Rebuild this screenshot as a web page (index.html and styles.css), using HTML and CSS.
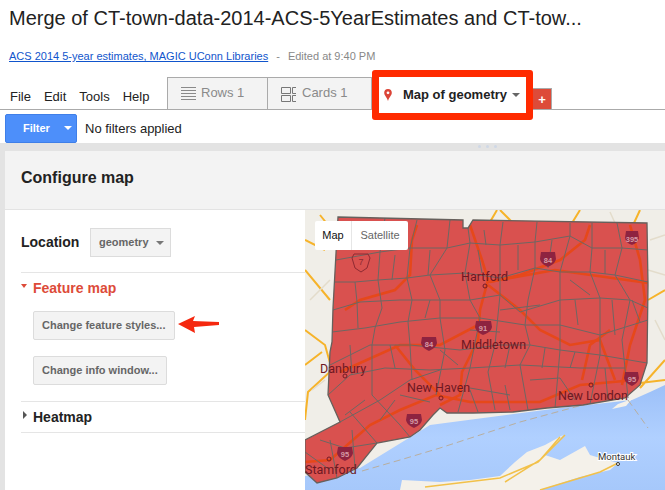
FILE: index.html
```html
<!DOCTYPE html>
<html>
<head lang="en">
    <meta charset="UTF-8">
    <title>Merge of CT-town-data</title>
    <link rel="stylesheet" href="styles.css">
</head>
<body>
<div id="page">
    <h1 class="title">Merge of CT-town-data-2014-ACS-5YearEstimates and CT-tow...</h1>
    <div class="meta">
        <a class="source" href="#">ACS 2014 5-year estimates, MAGIC UConn Libraries</a>
        <span class="dash">-</span>
        <span class="edited">Edited at 9:40 PM</span>
    </div>
    <div class="tabbar">
        <ul class="menu">
            <li>File</li>
            <li>Edit</li>
            <li>Tools</li>
            <li>Help</li>
        </ul>
        <div class="tab tab-rows">
            <svg class="tab-icon" width="15" height="16" viewBox="0 0 15 16">
                <path d="M0 1.5H15M0 4.5H15M0 7.5H15M0 10.5H15M0 13.5H15" stroke="#8a8a8a" fill="none"/>
            </svg>
            Rows 1
        </div>
        <div class="tab tab-cards">
            <svg class="tab-icon" width="16" height="16" viewBox="0 0 16 16">
                <path d="M.5 1.5H9.5V7.5H.5ZM.5 9.5H9.5V15.5H.5ZM15 1.5H11.5V7.5H15M15 9.5H11.5V15.5H15" stroke="#777" fill="none"/>
            </svg>
            Cards 1
        </div>
        <div class="tab-map">
            <svg class="pin" width="8" height="12" viewBox="0 0 8 12">
                <path d="M4 0A3.8 3.8 0 0 0 .2 3.8C.2 6.5 3 8.5 4 12 5 8.5 7.8 6.5 7.8 3.8A3.8 3.8 0 0 0 4 0Z" fill="#db4437"/>
                <circle cx="4" cy="3.8" r="1.4" fill="#fff"/>
            </svg>
            <span class="tab-map-name">Map of geometry</span>
            <span class="caret caret-dark"></span>
        </div>
        <div class="tab-add">+</div>
    </div>
    <div class="filterbar">
        <div class="filter-btn">
            <span>Filter</span>
            <span class="caret caret-white"></span>
        </div>
        <span class="filter-text">No filters applied</span>
    </div>
    <div class="splitter">
        <span class="grip"></span><span class="grip"></span><span class="grip"></span>
    </div>
    <div class="panel">
        <div class="panel-head">Configure map</div>
        <div class="panel-body">
            <div class="side">
                <div class="location">
                    <span class="location-label">Location</span>
                    <div class="select">geometry <span class="caret caret-grey"></span></div>
                </div>
                <div class="section">
                    <div class="section-title section-open"><span class="tri-down"></span>Feature map</div>
                    <div class="btn btn-first">Change feature styles...</div>
                    <div class="btn">Change info window...</div>
                </div>
                <div class="section section-closed">
                    <div class="section-title"><span class="tri-right"></span>Heatmap</div>
                </div>
            </div>
            <div class="map">
                <svg class="map-svg" width="360" height="280" viewBox="305 210 360 280">
                    <defs>
                        <linearGradient id="sea" x1="0" y1="0" x2="0" y2="1">
                            <stop offset="0" stop-color="#9cc0f8"/>
                            <stop offset="0.5" stop-color="#b0d0ff"/>
                            <stop offset="1" stop-color="#a6c8fb"/>
                        </linearGradient>
                    </defs>
                    <rect x="305" y="210" width="360" height="280" fill="#f0eee8"/>
                    <path d="M305 490V476L360 468 430 425 560 408 632 400 650 392 665 385V490Z" fill="url(#sea)"/>
                    <path d="M400 490L402 480 440 482 470 480 500 476 515 462 527 452 545 445 563 435 555 445 545 455 560 460 585 446 590 455 600 458 618 463 610 470 580 477 555 485 540 490Z" fill="#f4f1ea"/>
                    <path d="M618 404L632 399 626 406 612 409Z" fill="#f4f1ea"/>
                    <path d="M540 490L600 472 618 463M425 487L500 478 538 462 565 435M505 482L540 460 560 437" fill="none" stroke="#f2c14a" stroke-width="1.5"/>
                    <path d="M640 388L665 360M640 383L665 380M305 330L325 345 332 370 308 392 305 420M305 365L322 352M305 270L330 300M320 215L340 240M305 240L325 250M500 210L512 222M490 222L497 210M580 210L572 223M640 210L634 223M648 300L665 290" fill="none" stroke="#f6b32a" stroke-width="2"/>
                    <path d="M650 240L665 235M648 270L665 275M610 212L615 223M655 320L665 340M312 390L325 380M310 300L330 280" fill="none" stroke="#e3dccb" stroke-width="1.5"/>
                    <path d="M362 471L400 460 440 448 520 422 590 403M628 400L648 428" fill="none" stroke="#b8ae9f" stroke-width="1" stroke-dasharray="7 4"/>

                    <polygon class="state" points="338,217 463,220 463,228 468,228 473,220 647,223 648,285 647,363 640,385 625,398 583,405 547,408 513,412 473,413 447,413 440,408 433,415 420,430 410,437 377,443 357,468 337,478 317,483 305,472 305,440 340,422 328,395 330,352 332,342 333,308"/>

                    <g class="highways">
                        <path d="M345 310L360 300 395 290 410 275 412 240 417 225"/>
                        <path d="M470 225L482 260 488 280 480 310 478 340 462 372 460 395 440 405"/>
                        <path d="M490 282L520 275 560 260 585 240 590 225"/>
                        <path d="M488 285L520 310 540 330 570 345 600 340 615 380"/>
                        <path d="M488 282L555 270 648 283"/>
                        <path d="M630 225L640 260 645 300 630 345 622 385"/>
                        <path d="M305 462L330 460 370 425 400 410 436 395 470 402 540 402 580 385 635 380"/>
                        <path d="M340 372L400 345 440 345 478 325"/>
                        <path d="M395 345L415 370 440 395"/>
                        <path d="M582 380L590 345 610 330"/>
                    </g>
                    <g class="towns">
                        <path d="M336 260L380 252 410 248 447 248 470 243 500 245 535 242 570 236 592 248 622 248 648 250"/>
                        <path d="M334 282L355 282 378 280 407 278 430 275 465 273 500 278 535 268 560 272 590 272 615 275 648 282"/>
                        <path d="M333 310L360 302 400 300 440 300 470 300 500 295 520 312 560 300 600 298 630 300 648 308"/>
                        <path d="M332 332L365 328 400 322 440 318 480 318 525 325 560 325 600 335 648 320"/>
                        <path d="M330 365L370 345 410 345 460 350 500 345 530 345 560 350 600 355 647 363"/>
                        <path d="M328 395L350 375 385 368 430 370 470 368 520 365 580 368 625 368"/>
                        <path d="M340 422L380 400 410 380 440 370"/>
                        <path d="M320 440L345 448 377 443M350 412L377 443M372 395L400 425 410 437"/>
                        <path d="M385 218L380 252 378 280 382 308 375 328 372 345 372 395"/>
                        <path d="M417 220L410 248 407 278 412 300 408 322 410 345 412 380"/>
                        <path d="M450 220L447 248 430 275 440 300 440 318 445 350 436 395"/>
                        <path d="M468 228L470 243 465 273 470 300 480 318 470 368 458 412"/>
                        <path d="M503 222L500 245 500 278 500 295 495 345 488 372 495 410"/>
                        <path d="M537 222L535 242 535 268 528 300 525 325 530 345 520 365 528 410"/>
                        <path d="M570 223L570 236 560 272 560 300 560 325 560 350 555 408"/>
                        <path d="M592 223L592 248 590 272 600 298 600 335 600 355 590 404"/>
                        <path d="M617 223L622 248 615 275 630 300 622 340 625 368 628 398"/>
                        <path d="M355 282L357 302 358 328M478 250L482 273M518 245L518 270M470 330L500 332M500 310L540 305M570 280L590 295M430 300L425 318M390 345L395 368M440 350L458 365M530 380L560 378 575 400M470 388L510 395M400 395L430 402M305 452L330 470M330 440L337 478M352 430L355 468"/>
                        <path d="M350 345L352 375M395 255L392 280M430 250L428 275M484 230L486 245M552 240L548 268M605 250L605 274M575 300L578 325M612 300L615 335M510 345L505 368M545 348L542 368M575 352L570 368M505 385L510 410M470 390L478 412M605 368L608 400M395 400L380 420M365 400L345 415M632 300L640 322"/>
                    </g>
                    <polygon class="state-line" points="338,217 463,220 463,228 468,228 473,220 647,223 648,285 647,363 640,385 625,398 583,405 547,408 513,412 473,413 447,413 440,408 433,415 420,430 410,437 377,443 357,468 337,478 317,483 305,472 305,440 340,422 328,395 330,352 332,342 333,308"/>

                    <text class="place" x="461" y="281">Hartford</text>
                    <circle class="dot" cx="485" cy="286" r="2"/>
                    <text class="place" x="461" y="349">Middletown</text>
                    <text class="place" x="320" y="373">Danbury</text>
                    <circle class="dot" cx="345" cy="376" r="2"/>
                    <text class="place" x="407" y="392">New Haven</text>
                    <circle class="dot" cx="441" cy="398" r="2"/>
                    <text class="place" x="558" y="400">New London</text>
                    <circle class="dot" cx="591" cy="385" r="2"/>
                    <text class="place" x="305" y="474">Stamford</text>
                    <circle class="dot" cx="329" cy="459" r="2"/>
                    <text class="town-label" x="598" y="460">Montauk</text>
                    <circle class="dot-dark" cx="618" cy="464" r="1.5"/>

                    <g class="shield">
                        <path d="M626 231H638L639 238C638 243 634 244 632 245 630 244 626 243 625 238Z"/>
                        <text x="632" y="242">395</text>
                    </g>
                    <g class="shield">
                        <path d="M541 252H555L556 259C555 264 550 266 548 267 546 266 541 264 540 259Z"/>
                        <text x="548" y="263">84</text>
                    </g>
                    <g class="shield">
                        <path d="M476 321H491L492 327C491 332 486 334 483 335 481 334 476 332 475 327Z"/>
                        <text x="483" y="331">91</text>
                    </g>
                    <g class="shield">
                        <path d="M422 337H436L437 343C436 348 431 350 429 351 427 350 422 348 421 343Z"/>
                        <text x="429" y="347">84</text>
                    </g>
                    <g class="shield">
                        <path d="M625 372H638L639 378C638 383 634 385 632 386 630 385 625 383 624 378Z"/>
                        <text x="632" y="382">95</text>
                    </g>
                    <g class="shield">
                        <path d="M407 414H421L422 420C421 425 416 427 414 428 412 427 407 425 406 420Z"/>
                        <text x="414" y="424">95</text>
                    </g>
                    <g class="shield">
                        <path d="M338 447H352L353 453C352 458 347 460 345 461 343 460 338 458 337 453Z"/>
                        <text x="345" y="457">95</text>
                    </g>
                    <path d="M354 254H368L370 258 367 268 361 272 355 268 352 258Z" fill="none" stroke="#8e2a32"/>
                    <text class="us-route" x="361" y="265">7</text>
                </svg>
                <div class="map-type">
                    <span class="map-type-on">Map</span>
                    <span class="map-type-off">Satellite</span>
                </div>
            </div>
        </div>
    </div>
    <svg class="callout" width="44" height="20" viewBox="0 0 44 20">
        <path d="M1 9L18 1 16 6 42 7 42 10 17 12 18 18Z" fill="#f5280f"/>
    </svg>
    <div class="side-grip"></div>
</div>
</body>
</html>
```

FILE: styles.css
```css
*{
    margin: 0;
    padding: 0;
    box-sizing: border-box;
}
ul{
    list-style: none;
}
html,body{
    height: 490px;
    overflow: hidden;
    background: #fff;
}
body{
    font-family: "Liberation Sans", Arial, sans-serif;
    color: #222;
}
#page{
    position: relative;
    width: 665px;
    height: 490px;
    overflow: hidden;
}
.title{
    height: 37px;
    padding: 3px 0 0 9px;
    font-size: 20px;
    line-height: 30px;
    font-weight: normal;
    white-space: nowrap;
}
.meta{
    display: flex;
    align-items: center;
    height: 22px;
    margin-top: 8px;
    padding-left: 9px;
    font-size: 11px;
}
.source{
    color: #1155cc;
    text-decoration: underline;
}
.dash{
    margin: 0 8px;
    color: #888;
}
.edited{
    color: #888;
}
.tabbar{
    display: flex;
    align-items: flex-end;
    height: 43px;
    border-bottom: 1px solid #aaa;
}
.menu{
    display: flex;
    gap: 13px;
    width: 167px;
    padding: 0 0 4px 10px;
    font-size: 13px;
    line-height: 16px;
}
.tab{
    display: flex;
    align-items: flex-start;
    gap: 5px;
    height: 33px;
    margin-bottom: -1px;
    padding: 7px 0 0 13px;
    background: #f3f3f3;
    border: 1px solid #aaa;
    border-bottom: 1px solid #aaa;
    color: #8a8a8a;
    font-size: 13px;
    line-height: 16px;
}
.tab-rows{
    width: 101px;
}
.tab-cards{
    width: 104px;
    border-left: 0;
    padding-left: 13px;
}
.tab-icon{
    margin-top: 1px;
}
.tab-map{
    position: relative;
    z-index: 2;
    display: flex;
    align-items: center;
    width: 161px;
    height: 50px;
    margin-bottom: -11px;
    padding: 0 0 1px 5px;
    background: #fff;
    border: 7px solid #ff2a00;
    border-radius: 3px;
    font-size: 13px;
    white-space: nowrap;
}
.pin{
    margin-right: 11px;
}
.tab-map-name{
    font-weight: bold;
    color: #222;
}
.caret{
    display: inline-block;
    width: 0;
    height: 0;
    border-left: 4px solid transparent;
    border-right: 4px solid transparent;
}
.caret-dark{
    margin-left: 5px;
    border-top: 4px solid #666;
}
.caret-white{
    margin-left: 14px;
    border-top: 4px solid #fff;
}
.caret-grey{
    margin-left: 4px;
    border-top: 4px solid #777;
    vertical-align: middle;
}
.tab-add{
    width: 19px;
    height: 21px;
    background: #dd4b39;
    border: 1px solid #aaa;
    border-bottom: 0;
    border-left: 0;
    color: #fff;
    font-size: 13px;
    font-weight: bold;
    line-height: 21px;
    text-align: center;
}
.filterbar{
    display: flex;
    align-items: center;
    height: 33px;
    padding: 3px 0 0 5px;
}
.filter-btn{
    display: flex;
    align-items: center;
    width: 72px;
    height: 29px;
    padding-left: 17px;
    background: #4d8ffa;
    border: 1px solid #3f7fe8;
    border-radius: 2px;
    color: #fff;
    font-size: 11px;
    font-weight: bold;
}
.filter-text{
    margin-left: 8px;
    font-size: 13px;
}
.splitter{
    display: flex;
    justify-content: center;
    gap: 5px;
    height: 8px;
    padding: 2px 0 0 310px;
    background: #e3e3e3;
}
.grip{
    width: 3px;
    height: 3px;
    border-radius: 50%;
    background: #cfd8e6;
}
.panel{
    display: flex;
    flex-direction: column;
    height: 339px;
    margin-left: 5px;
    background: #fff;
}
.panel-head{
    height: 60px;
    padding-left: 16px;
    background: #f3f3f3;
    border-bottom: 1px solid #e3e3e3;
    font-size: 16px;
    font-weight: bold;
    line-height: 54px;
}
.panel-body{
    display: flex;
    flex: 1;
}
.side{
    width: 300px;
    padding-left: 16px;
}
.location{
    display: flex;
    align-items: center;
    height: 63px;
    padding-top: 2px;
    border-bottom: 1px solid #e5e5e5;
}
.location-label{
    width: 69px;
    font-size: 14px;
    font-weight: bold;
}
.select{
    width: 81px;
    height: 29px;
    padding-left: 8px;
    background: #f3f3f3;
    border: 1px solid #dcdcdc;
    color: #666;
    font-size: 11px;
    font-weight: bold;
    line-height: 26px;
}
.section{
    padding: 6px 0 16px;
    border-bottom: 1px solid #e5e5e5;
}
.section-closed{
    height: 31px;
    padding: 6px 0 0;
}
.section-title{
    display: flex;
    align-items: center;
    height: 18px;
    font-size: 14px;
    font-weight: bold;
}
.section-open{
    color: #dd4b39;
}
.tri-down{
    width: 0;
    height: 0;
    margin: 0 6px 4px 0;
    border-left: 3.5px solid transparent;
    border-right: 3.5px solid transparent;
    border-top: 4px solid #dd4b39;
}
.tri-right{
    width: 0;
    height: 0;
    margin: 0 6px 4px 2px;
    border-top: 4px solid transparent;
    border-bottom: 4px solid transparent;
    border-left: 4px solid #555;
}
.btn{
    width: 134px;
    height: 29px;
    margin: 16px 0 0 12px;
    padding-left: 8px;
    background: #f3f3f3;
    border: 1px solid #dcdcdc;
    border-radius: 2px;
    color: #666;
    font-size: 11px;
    font-weight: bold;
    line-height: 27px;
    white-space: nowrap;
}
.btn-first{
    width: 142px;
    margin-top: 14px;
}
.map{
    position: relative;
    width: 360px;
    height: 280px;
}
.map-svg{
    display: block;
}
.map-type{
    position: absolute;
    left: 10px;
    top: 11px;
    display: flex;
    height: 29px;
    background: #fff;
    border-radius: 2px;
    font-size: 11px;
    line-height: 29px;
}
.map-type-on{
    width: 37px;
    border-right: 1px solid #e6e6e6;
    color: #111;
    text-align: center;
}
.map-type-off{
    width: 56px;
    color: #666;
    text-align: center;
}
.state{
    fill: #d9514f;
}
.highways path{
    fill: none;
    stroke: #e6481a;
    stroke-width: 2.6;
}
.towns path{
    fill: none;
    stroke: #6d6763;
    stroke-width: 1;
}
.state-line{
    fill: none;
    stroke: #66605c;
    stroke-width: 1.3;
}
.place{
    fill: #6e1822;
    font-family: "Roboto", sans-serif;
    font-size: 12.5px;
}
.town-label{
    fill: #333;
    stroke: #fff;
    stroke-width: 2px;
    paint-order: stroke;
    font-family: "Roboto", sans-serif;
    font-size: 9.5px;
}
.dot{
    fill: none;
    stroke: #741a24;
}
.dot-dark{
    fill: #fff;
    stroke: #333;
}
.shield path{
    fill: #8e2340;
}
.shield text{
    fill: #d79aa5;
    font-size: 7.5px;
    font-weight: bold;
    text-anchor: middle;
}
.us-route{
    fill: #8e2a32;
    font-size: 9px;
    text-anchor: middle;
}
.callout{
    position: absolute;
    left: 177px;
    top: 315px;
}
.side-grip{
    position: absolute;
    left: 0;
    top: 143px;
    width: 5px;
    height: 347px;
    background: #e3e3e3;
}
```
